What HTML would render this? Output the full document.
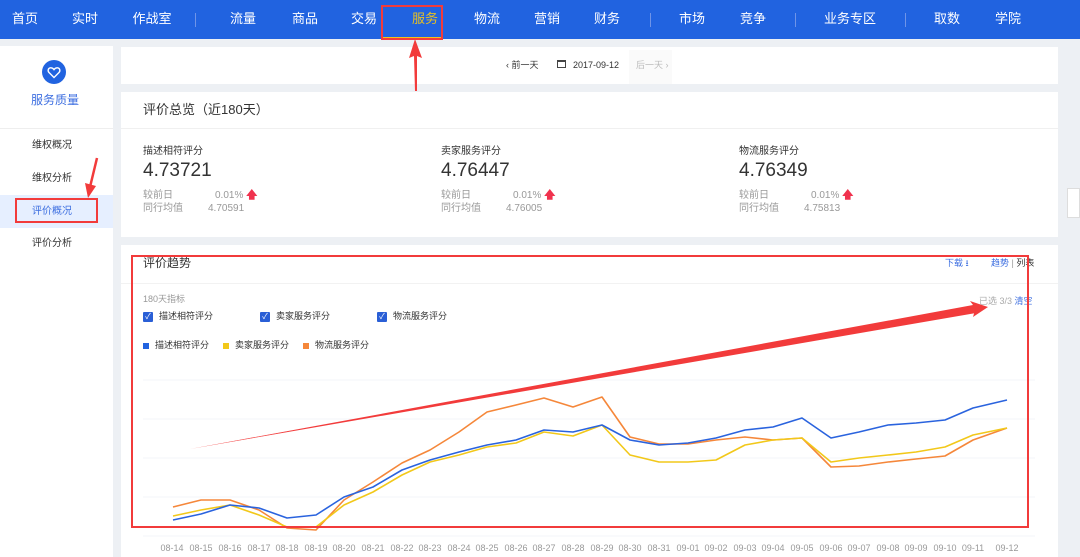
<!DOCTYPE html>
<html><head><meta charset="utf-8">
<style>
*{margin:0;padding:0;box-sizing:border-box}
body{width:1080px;height:557px;overflow:hidden;background:#edf0f4;font-family:"Liberation Sans","Noto Sans CJK SC",sans-serif;position:relative;color:#333;line-height:1.15}
.a{position:absolute;white-space:nowrap}
.top{left:0;top:0;width:1080px;height:39px;background:#2163e0}
.nav{color:#fff;font-size:13px;top:12px;transform:translateX(-50%)}
.dv{top:13px;width:1px;height:14px;background:#6f94e8}
.card{background:#fff}
.g{color:#999;font-size:10px}
.up{color:#f0324e;font-size:11px;font-weight:bold}
</style></head><body>
<div class="a top"></div>
<div class="a nav" style="left:25px">首页</div>
<div class="a nav" style="left:85px">实时</div>
<div class="a nav" style="left:152px">作战室</div>
<div class="a dv" style="left:195px"></div>
<div class="a nav" style="left:243px">流量</div>
<div class="a nav" style="left:305px">商品</div>
<div class="a nav" style="left:364px">交易</div>
<div class="a nav" style="left:425px;color:#e8c022">服务</div>
<div class="a" style="left:383px;top:37px;width:59px;height:3px;background:#f2c21a"></div>
<div class="a" style="left:381px;top:5px;width:62px;height:35px;border:2px solid #f23b3b"></div>
<div class="a nav" style="left:487px">物流</div>
<div class="a nav" style="left:547px">营销</div>
<div class="a nav" style="left:607px">财务</div>
<div class="a dv" style="left:650px"></div>
<div class="a nav" style="left:692px">市场</div>
<div class="a nav" style="left:753px">竞争</div>
<div class="a dv" style="left:795px"></div>
<div class="a nav" style="left:850px">业务专区</div>
<div class="a dv" style="left:905px"></div>
<div class="a nav" style="left:947px">取数</div>
<div class="a nav" style="left:1008px">学院</div>

<!-- sidebar -->
<div class="a card" style="left:0;top:46px;width:113px;height:511px"></div>
<div class="a" style="left:42px;top:60px;width:24px;height:24px;border-radius:50%;background:#2163e0"></div>
<svg class="a" style="left:47px;top:66px" width="14" height="13" viewBox="0 0 14 13"><path d="M7 11.5 L2 6.5 C0.5 5 1 2 3.5 1.8 C5 1.7 6.3 2.6 7 3.6 C7.7 2.6 9 1.7 10.5 1.8 C13 2 13.5 5 12 6.5 Z" fill="none" stroke="#fff" stroke-width="1.4"/></svg>
<div class="a" style="left:31px;top:94px;font-size:12px;color:#3c6ee0">服务质量</div>
<div class="a" style="left:0;top:128px;width:113px;height:1px;background:#eee"></div>
<div class="a" style="left:32px;top:140px;font-size:10px">维权概况</div>
<div class="a" style="left:32px;top:173px;font-size:10px">维权分析</div>
<div class="a" style="left:0;top:195px;width:113px;height:33px;background:#e6efff"></div>
<div class="a" style="left:32px;top:206px;font-size:10px;color:#3c6ee0">评价概况</div>
<div class="a" style="left:15px;top:198px;width:83px;height:25px;border:2px solid #f23b3b"></div>
<div class="a" style="left:32px;top:238px;font-size:10px">评价分析</div>
<svg class="a" style="left:80px;top:155px" width="24" height="45"><line x1="17" y1="3" x2="10" y2="32" stroke="#f23b3b" stroke-width="2.5"/><polygon points="5,28 16,31 8,43" fill="#f23b3b"/></svg>

<!-- date card -->
<div class="a card" style="left:121px;top:47px;width:937px;height:37px"></div>
<div class="a" style="left:506px;top:60px;font-size:9px;color:#333">‹ 前一天</div>
<div class="a" style="left:557px;top:60px;width:9px;height:8px;border:1.5px solid #444;border-top-width:2.5px"></div>
<div class="a" style="left:573px;top:60px;font-size:9px;color:#333">2017-09-12</div>
<div class="a" style="left:629px;top:50px;width:43px;height:34px;background:#fafafa"></div>
<div class="a" style="left:636px;top:60px;font-size:9px;color:#bbb">后一天 ›</div>
<svg class="a" style="left:405px;top:38px" width="22" height="55"><polygon points="10,1 4,20 9,18 10,53 12,53 12,18 17,20" fill="#f23b3b"/></svg>

<!-- overview -->
<div class="a card" style="left:121px;top:92px;width:937px;height:145px"></div>
<div class="a" style="left:121px;top:128px;width:937px;height:1px;background:#f0f0f0"></div>
<div class="a" style="left:143px;top:103px;font-size:13px">评价总览（近180天）</div>
<div class="a" style="left:143px;top:146px;font-size:10px">描述相符评分</div>
<div class="a" style="left:143px;top:160px;font-size:19px">4.73721</div>
<div class="a g" style="left:143px;top:190px">较前日</div><div class="a g" style="left:215px;top:189px">0.01% <span class="up">🡅</span></div>
<div class="a g" style="left:143px;top:203px">同行均值</div><div class="a g" style="left:208px;top:203px">4.70591</div>
<div class="a" style="left:441px;top:146px;font-size:10px">卖家服务评分</div>
<div class="a" style="left:441px;top:160px;font-size:19px">4.76447</div>
<div class="a g" style="left:441px;top:190px">较前日</div><div class="a g" style="left:513px;top:189px">0.01% <span class="up">🡅</span></div>
<div class="a g" style="left:441px;top:203px">同行均值</div><div class="a g" style="left:506px;top:203px">4.76005</div>
<div class="a" style="left:739px;top:146px;font-size:10px">物流服务评分</div>
<div class="a" style="left:739px;top:160px;font-size:19px">4.76349</div>
<div class="a g" style="left:739px;top:190px">较前日</div><div class="a g" style="left:811px;top:189px">0.01% <span class="up">🡅</span></div>
<div class="a g" style="left:739px;top:203px">同行均值</div><div class="a g" style="left:804px;top:203px">4.75813</div>
<div class="a card" style="left:1067px;top:188px;width:13px;height:30px;border:1px solid #ddd"></div>

<!-- trend -->
<div class="a card" style="left:121px;top:245px;width:937px;height:312px"></div>
<div class="a" style="left:121px;top:283px;width:937px;height:1px;background:#f2f2f2"></div>
<div class="a" style="left:143px;top:257px;font-size:12px">评价趋势</div>
<div class="a" style="left:945px;top:258px;font-size:9px;color:#3c6ee0">下载 ⭳</div>
<div class="a" style="left:991px;top:258px;font-size:9px;color:#3c6ee0">趋势 <span style="color:#999">|</span> <span style="color:#333">列表</span></div>
<div class="a g" style="left:143px;top:294px;font-size:9px">180天指标</div>
<div class="a" style="left:979px;top:296px;font-size:9px;color:#aaa">已选 3/3 <span style="color:#3c6ee0">清空</span></div>
<div class="a" style="left:143px;top:312px;width:10px;height:10px;background:#2a5fd6;border-radius:1px;color:#fff;font-size:8px;line-height:10px;text-align:center">✓</div>
<div class="a" style="left:159px;top:311px;font-size:9px">描述相符评分</div>
<div class="a" style="left:260px;top:312px;width:10px;height:10px;background:#2a5fd6;border-radius:1px;color:#fff;font-size:8px;line-height:10px;text-align:center">✓</div>
<div class="a" style="left:276px;top:311px;font-size:9px">卖家服务评分</div>
<div class="a" style="left:377px;top:312px;width:10px;height:10px;background:#2a5fd6;border-radius:1px;color:#fff;font-size:8px;line-height:10px;text-align:center">✓</div>
<div class="a" style="left:393px;top:311px;font-size:9px">物流服务评分</div>
<div class="a" style="left:143px;top:343px;width:6px;height:6px;background:#2163e0"></div>
<div class="a" style="left:155px;top:340px;font-size:9px">描述相符评分</div>
<div class="a" style="left:223px;top:343px;width:6px;height:6px;background:#f2c81a"></div>
<div class="a" style="left:235px;top:340px;font-size:9px">卖家服务评分</div>
<div class="a" style="left:303px;top:343px;width:6px;height:6px;background:#f5873a"></div>
<div class="a" style="left:315px;top:340px;font-size:9px">物流服务评分</div>

<svg class="a" style="left:0;top:0" width="1080" height="557">
<g stroke="#f3f5f8" stroke-width="1">
<line x1="143" y1="380" x2="1035" y2="380"/><line x1="143" y1="419" x2="1035" y2="419"/><line x1="143" y1="458" x2="1035" y2="458"/><line x1="143" y1="497" x2="1035" y2="497"/><line x1="143" y1="536" x2="1035" y2="536"/>
</g>
<g fill="none" stroke-width="1.6" stroke-linejoin="round">
<polyline stroke="#f5873a" points="173,507 201,500 230,500 259,510 287,528 316,530 344,500 373,482 402,463 430,450 459,432 487,412 516,405 544,398 573,407 602,397 630,437 659,444 688,444 716,440 745,437 773,440 802,438 831,467 859,466 888,462 916,459 945,456 973,440 1007,428"/>
<polyline stroke="#f2c81a" points="173,516 201,510 230,505 259,515 287,527 316,527 344,505 373,492 402,475 430,462 459,455 487,447 516,443 544,432 573,436 602,425 630,455 659,462 688,462 716,460 745,445 773,440 802,438 831,462 859,458 888,455 916,452 945,447 973,435 1007,428"/>
<polyline stroke="#2a63de" points="173,520 201,514 230,505 259,508 287,518 316,515 344,497 373,487 402,470 430,460 459,452 487,445 516,440 544,430 573,432 602,425 630,440 659,445 688,443 716,438 745,430 773,427 802,418 831,438 859,432 888,425 916,423 945,420 973,408 1007,400"/>
</g>
<polygon points="190,449 975,310 973,317 988,307 970,301 973,305" fill="#f23b3b"/>
<polygon points="190,449 975,308 976,313" fill="#f23b3b"/>
<rect x="132" y="256" width="896" height="271" fill="none" stroke="#f23b3b" stroke-width="2"/>
<g font-size="9" fill="#999" text-anchor="middle" font-family="Liberation Sans">
<text x="172" y="551">08-14</text><text x="201" y="551">08-15</text><text x="230" y="551">08-16</text><text x="259" y="551">08-17</text><text x="287" y="551">08-18</text><text x="316" y="551">08-19</text><text x="344" y="551">08-20</text><text x="373" y="551">08-21</text><text x="402" y="551">08-22</text><text x="430" y="551">08-23</text><text x="459" y="551">08-24</text><text x="487" y="551">08-25</text><text x="516" y="551">08-26</text><text x="544" y="551">08-27</text><text x="573" y="551">08-28</text><text x="602" y="551">08-29</text><text x="630" y="551">08-30</text><text x="659" y="551">08-31</text><text x="688" y="551">09-01</text><text x="716" y="551">09-02</text><text x="745" y="551">09-03</text><text x="773" y="551">09-04</text><text x="802" y="551">09-05</text><text x="831" y="551">09-06</text><text x="859" y="551">09-07</text><text x="888" y="551">09-08</text><text x="916" y="551">09-09</text><text x="945" y="551">09-10</text><text x="973" y="551">09-11</text><text x="1007" y="551">09-12</text>
</g>
</svg>
</body></html>
